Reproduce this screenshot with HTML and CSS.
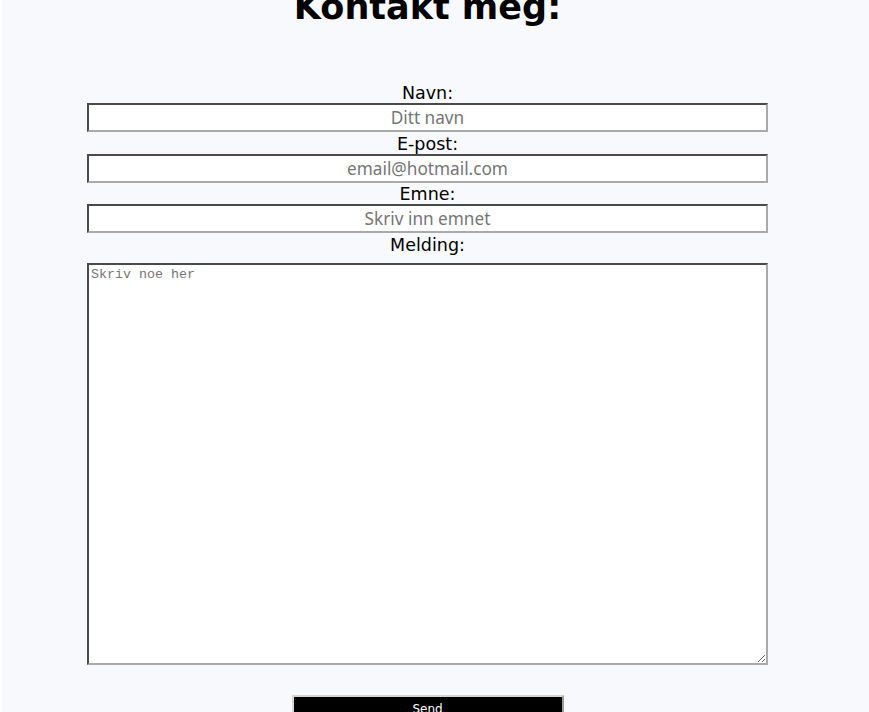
FILE: index.html
```html
<!DOCTYPE html>
<html lang="no">
<head>
<meta charset="utf-8">
<title>Kontakt meg</title>
<link rel="stylesheet" href="styles.css">
</head>
<body>
<div class="page">
  <div class="content">
    <h1 class="title">Kontakt meg:</h1>
    <form class="form">
      <label class="label" for="navn">Navn:</label>
      <input class="field" id="navn" type="text" placeholder="Ditt navn">
      <label class="label" for="epost">E-post:</label>
      <input class="field" id="epost" type="email" placeholder="email@hotmail.com">
      <label class="label" for="emne">Emne:</label>
      <input class="field" id="emne" type="text" placeholder="Skriv inn emnet">
      <label class="label" for="melding">Melding:</label>
      <textarea class="message" id="melding" placeholder="Skriv noe her"></textarea>
      <button class="send" type="button">Send</button>
    </form>
  </div>
</div>
</body>
</html>
```
FILE: styles.css
```css
html, body {
  margin: 0;
  padding: 0;
  background: #ffffff;
}
.page {
  margin-left: 2px;
  min-height: 100vh;
  background: #f8f9fd;
  overflow: hidden;
}
.content {
  width: 681px;
  margin-left: 85px;
}
.title {
  margin: -13px 0 0;
  font-family: "DejaVu Sans", Verdana, sans-serif;
  font-weight: bold;
  font-size: 35px;
  text-align: center;
  color: #000;
}
.form {
  display: flex;
  flex-direction: column;
  margin-top: 56px;
}
.label {
  display: block;
  text-align: center;
  font-family: "DejaVu Sans", Verdana, sans-serif;
  font-size: 17.5px;
  color: #000;
}
.field {
  display: block;
  box-sizing: border-box;
  width: 681px;
  height: 29px;
  margin: 0 0 1.6px;
  padding: 1px 2px;
  border-width: 2px;
  border-style: solid;
  border-color: #4a4a4a #aaaaaa #aaaaaa #4a4a4a;
  background: #fff;
  font-family: "Noto Sans", "Open Sans", sans-serif;
  font-size: 17.2px;
  text-align: center;
}
.field::placeholder {
  color: #757575;
}
.message {
  display: block;
  box-sizing: border-box;
  width: 681px;
  height: 402px;
  margin: 8px 0 0;
  padding: 2px;
  border-width: 2px;
  border-style: solid;
  border-color: #4a4a4a #aaaaaa #aaaaaa #4a4a4a;
  background: #fff;
  font-family: "Liberation Mono", monospace;
  font-size: 13.33px;
}
.message::placeholder {
  color: #757575;
}
.send {
  display: block;
  box-sizing: border-box;
  width: 272px;
  margin: 30px auto 0;
  padding: 5px 0 8px;
  border-width: 2px;
  border-style: solid;
  border-color: #d4d4d4 #9a9a9a #9a9a9a #d4d4d4;
  background: #000;
  color: #fff;
  font-family: "DejaVu Sans", Verdana, sans-serif;
  font-size: 12px;
}
```
